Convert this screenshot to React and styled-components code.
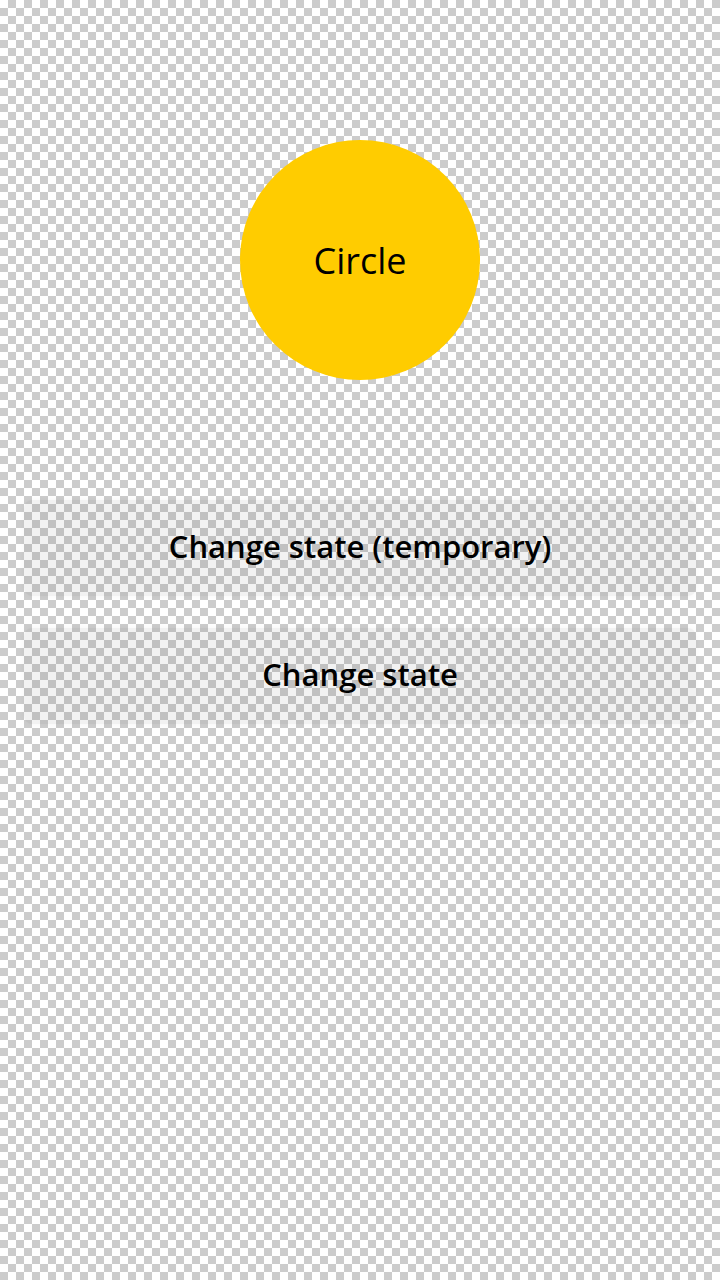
import styled, { createGlobalStyle } from "styled-components";

const GlobalStyle = createGlobalStyle`
    html, body {
        margin: 0;
        padding: 0;
    }

    body {
        font-family: "Open Sans", "Noto Sans", sans-serif;
        background-color: #ffffff;
        background-image:
            linear-gradient(45deg, #cccccc 25%, transparent 25%, transparent 75%, #cccccc 75%),
            linear-gradient(45deg, #cccccc 25%, transparent 25%, transparent 75%, #cccccc 75%);
        background-size: 16px 16px;
        background-position: 0 0, 8px 8px;
    }
`

const Screen = styled.div`
    min-height: 1280px;
    display: flex;
    flex-direction: column;
    align-items: center;
    padding-top: 140px;
    box-sizing: border-box;
`

const Circle = styled.div`
    width: 240px;
    height: 240px;
    border-radius: 50%;
    background: #ffcc00;
    display: flex;
    align-items: center;
    justify-content: center;
    font-size: 36px;
    color: #000;
`

const Buttons = styled.div`
    margin-top: 120px;
    width: 100%;
    padding: 0 24px;
    box-sizing: border-box;
    display: flex;
    flex-direction: column;
    gap: 32px;
`

const Button = styled.button`
    height: 96px;
    padding: 0 0 4px;
    border: none;
    border-radius: 8px;
    background: rgba(0, 0, 0, 0.05);
    box-shadow: 0 0 6px rgba(0, 0, 0, 0.04);
    font-family: inherit;
    font-size: 31px;
    font-weight: 600;
    color: #000;
    cursor: pointer;
`

function App() {
    return (
        <>
            <GlobalStyle />
            <Screen>
                <Circle>Circle</Circle>
                <Buttons>
                    <Button>Change state (temporary)</Button>
                    <Button>Change state</Button>
                </Buttons>
            </Screen>
        </>
    )
}

export default App;
